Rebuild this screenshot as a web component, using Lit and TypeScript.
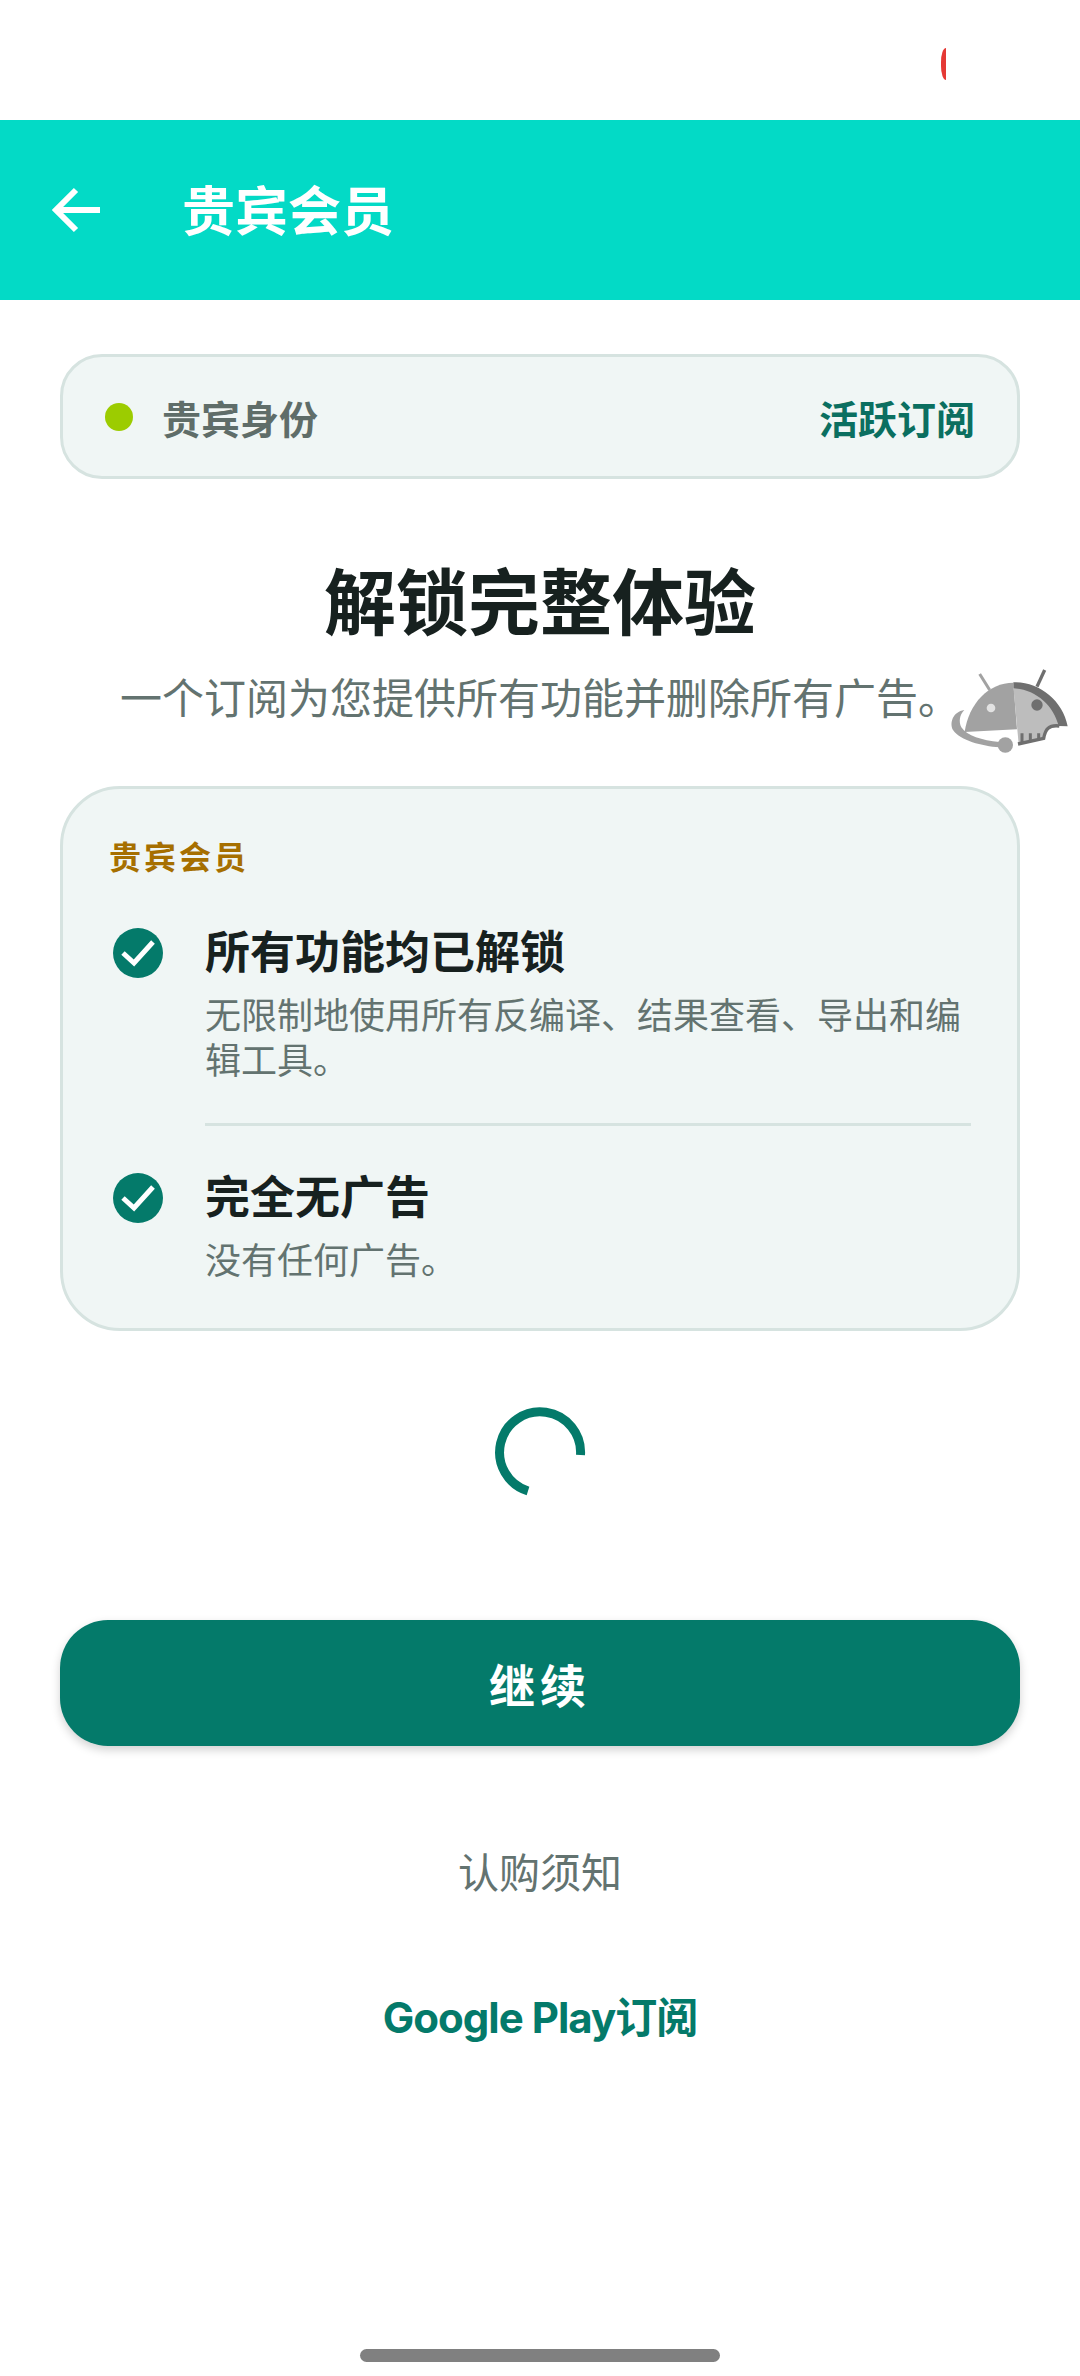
import { LitElement, css, html, svg } from "lit";
import { customElement } from "lit/decorators.js";

const checkIcon = html`<svg class="check" viewBox="0 0 50 50">
  <circle cx="25" cy="25" r="25" fill="#047a6a"></circle>
  <path d="M10 25 L21 35 L40 14" fill="none" stroke="#fff" stroke-width="5"></path>
</svg>`;

const robot = svg`
  <path d="M233 102 L263 150" stroke="#a2a2a2" stroke-width="9" fill="none"></path>
  <path d="M428 90 L405 140" stroke="#6f6f6f" stroke-width="10" fill="none"></path>
  <path d="M334 128 C260 128 200 190 188 276 L345 268 Z" fill="#a2a2a2"></path>
  <path d="M334 140 C400 140 455 190 475 258 C440 256 430 265 425 295 L350 312 Z" fill="#bdbdbd"></path>
  <path d="M334 127 C410 125 482 180 497 259 L470 258 C455 195 400 148 335 145 Z" fill="#6f6f6f"></path>
  <path d="M472 258 C440 254 430 268 425 295 L348 312" stroke="#6f6f6f" stroke-width="10" fill="none"></path>
  <path d="M360 280 V308 M385 280 V304 M410 280 V300" stroke="#6f6f6f" stroke-width="9" fill="none"></path>
  <circle cx="267" cy="204" r="13" fill="#e2e2e2"></circle>
  <circle cx="405" cy="195" r="17" fill="#6f6f6f"></circle>
  <path d="M187 210 C152 215 142 250 153 270 C175 302 240 318 292 322 L292 306 C240 301 195 288 178 262 C170 245 172 225 187 210 Z" fill="#a2a2a2"></path>
  <circle cx="310" cy="315" r="23" fill="#a2a2a2"></circle>
`;

@customElement("app-root")
export class AppRoot extends LitElement {
  static styles = css`
    :host {
      display: block;
      width: 1080px;
      height: 2376px;
      overflow: hidden;
      background: #fff;
      font-family: "Inter", "Noto Sans CJK SC", sans-serif;
    }

    .status-bar {
      height: 120px;
      display: flex;
      justify-content: flex-end;
      align-items: center;
      padding-right: 134px;
      box-sizing: border-box;
    }

    .cutoff {
      width: 5px;
      height: 32px;
      margin-top: 8px;
      background: #e53935;
      border-radius: 5px 0 0 5px / 14px 0 0 14px;
    }

    .app-bar {
      height: 180px;
      background: #03dac6;
      display: flex;
      align-items: center;
      color: #fff;
    }

    .back {
      width: 52px;
      height: 48px;
      margin-left: 50px;
    }

    .app-bar h1 {
      margin: 3px 0 0 80px;
      font-size: 53px;
      line-height: 64px;
      font-weight: 700;
    }

    main {
      padding: 54px 60px 0;
      display: flex;
      flex-direction: column;
    }

    .status {
      height: 125px;
      box-sizing: border-box;
      border: 3px solid #d6e3e0;
      border-radius: 42px;
      background: #f0f6f5;
      display: flex;
      align-items: center;
      padding: 0 42px 0 44px;
      font-size: 39px;
      font-weight: 700;
      color: #5f6d69;
    }

    .dot {
      width: 28px;
      height: 28px;
      border-radius: 50%;
      background: #9ccc00;
      margin-right: 29px;
      margin-left: -2px;
    }

    .status .active {
      margin-left: auto;
      color: #0b6f60;
    }

    h2 {
      margin: 79px 0 0;
      text-align: center;
      font-size: 72px;
      line-height: 90px;
      font-weight: 700;
      color: #17211f;
    }

    .sub {
      position: relative;
      margin-top: 23px;
      height: 56px;
      line-height: 56px;
      text-align: center;
      font-size: 42px;
      color: #637370;
    }

    .robot {
      position: absolute;
      left: 842px;
      top: -31px;
      width: 180px;
      height: 130px;
    }

    .card {
      margin-top: 59px;
      height: 545px;
      box-sizing: border-box;
      border: 3px solid #d6e3e0;
      border-radius: 60px;
      background: #f0f6f5;
      padding: 49px 46px 0 46px;
    }

    .label {
      font-size: 32px;
      line-height: 40px;
      font-weight: 700;
      letter-spacing: 3px;
      color: #a66f00;
    }

    .item {
      display: flex;
      gap: 42px;
      margin-top: 50px;
      padding-left: 4px;
    }

    .divider + .item {
      margin-top: 47px;
    }

    .check {
      width: 50px;
      height: 50px;
      flex: none;
    }

    .text {
      flex: 1;
    }

    .title {
      font-size: 45px;
      line-height: 50px;
      font-weight: 700;
      color: #17211f;
    }

    .desc {
      margin-top: 16px;
      font-size: 36px;
      line-height: 45px;
      color: #637370;
    }

    .divider {
      height: 3px;
      background: #d6e3e0;
      margin: 39px 0 0 96px;
    }

    .spinner {
      display: block;
      align-self: center;
      width: 100px;
      height: 100px;
      margin-top: 71px;
    }

    .continue {
      margin-top: 118px;
      height: 126px;
      border-radius: 48px;
      background: #047a6a;
      box-shadow: 0 4px 10px rgba(0, 0, 0, 0.18);
      color: #fff;
      font-size: 46px;
      font-weight: 700;
      letter-spacing: 5px;
      display: flex;
      align-items: center;
      justify-content: center;
    }

    .notice {
      margin-top: 102px;
      text-align: center;
      font-size: 41px;
      line-height: 50px;
      color: #637370;
    }

    .play {
      margin-top: 95px;
      text-align: center;
      font-size: 42px;
      line-height: 50px;
      font-weight: 700;
      letter-spacing: -1px;
      color: #047a6a;
    }

    .home {
      width: 360px;
      height: 13px;
      border-radius: 7px;
      background: #808080;
      margin: 306px auto 0;
    }
  `;

  render() {
    return html`
      <div class="status-bar"><div class="cutoff"></div></div>
      <header class="app-bar">
        <svg class="back" viewBox="0 0 52 48">
          <path d="M50 24 H7 M26 4 L6 24 L26 44" fill="none" stroke="#fff" stroke-width="6"></path>
        </svg>
        <h1>贵宾会员</h1>
      </header>
      <main>
        <div class="status">
          <span class="dot"></span>
          <span>贵宾身份</span>
          <span class="active">活跃订阅</span>
        </div>
        <h2>解锁完整体验</h2>
        <div class="sub">
          一个订阅为您提供所有功能并删除所有广告。
          <svg class="robot" viewBox="0 0 540 390">${robot}</svg>
        </div>
        <section class="card">
          <div class="label">贵宾会员</div>
          <div class="item">
            ${checkIcon}
            <div class="text">
              <div class="title">所有功能均已解锁</div>
              <div class="desc">无限制地使用所有反编译、结果查看、导出和编辑工具。</div>
            </div>
          </div>
          <div class="divider"></div>
          <div class="item">
            ${checkIcon}
            <div class="text">
              <div class="title">完全无广告</div>
              <div class="desc">没有任何广告。</div>
            </div>
          </div>
        </section>
        <svg class="spinner" viewBox="0 0 100 100">
          <path d="M90.5 53 A40.5 40.5 0 1 0 38 89" fill="none" stroke="#047a6a" stroke-width="9"></path>
        </svg>
        <div class="continue">继续</div>
        <div class="notice">认购须知</div>
        <div class="play">Google Play订阅</div>
      </main>
      <div class="home"></div>
    `;
  }
}
